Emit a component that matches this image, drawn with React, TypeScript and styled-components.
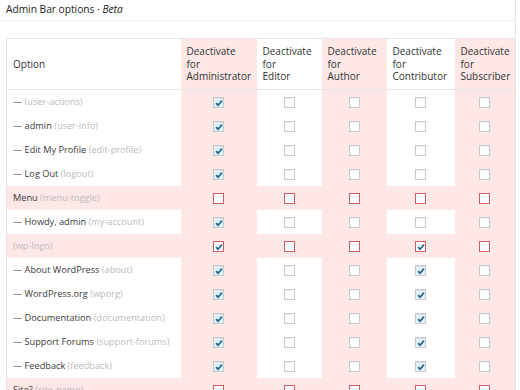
import styled, { createGlobalStyle } from "styled-components";

const GlobalStyle = createGlobalStyle`
  html, body {
    margin: 0;
    padding: 0;
    background: #fff;
  }
  body {
    font-family: "Open Sans", "Liberation Sans", sans-serif;
    color: #444;
  }
`;

const PINK = "#fde8e7";

const Panel = styled.div`
  width: 515px;
  height: 390px;
  overflow: hidden;
  border-right: 1px solid #e5e5e5;
  background: #fff;
`;

const Title = styled.h3`
  margin: 0;
  height: 20px;
  padding: 0 6px;
  font-size: 10.2px;
  font-weight: 400;
  line-height: 18px;
  color: #222;
  border-bottom: 1px solid #eee;
  em {
    font-style: italic;
  }
`;

const Inside = styled.div`
  padding: 17px 0 0 6px;
`;

const Table = styled.table`
  border-collapse: collapse;
  table-layout: fixed;
  width: 509px;
  border: 1px solid #e5e5e5;
  font-size: 9.2px;
`;

const Col = styled.col<{ $w: number }>`
  width: ${({ $w }) => $w}px;
`;

const HeadCell = styled.th<{ $pink?: boolean }>`
  height: 50px;
  padding: 0 6px;
  text-align: left;
  font-size: 10px;
  font-weight: 400;
  line-height: 12.5px;
  color: #333;
  vertical-align: middle;
  background: ${({ $pink }) => ($pink ? PINK : "#fff")};
  border-bottom: 1px solid #e5e5e5;
`;

const Row = styled.tr<{ $parent?: boolean }>`
  height: 24px;
  background: ${({ $parent }) => ($parent ? PINK : "transparent")};
`;

const NameCell = styled.td`
  padding: 0 6px;
  white-space: nowrap;
  color: #3a3a3a;
`;

const Slug = styled.span`
  color: #bbb;
`;

const BoxCell = styled.td<{ $pink?: boolean }>`
  padding: 0;
  text-align: center;
  vertical-align: middle;
  background: ${({ $pink }) => ($pink ? PINK : "#fff")};
  tr[data-parent="true"] & {
    background: transparent;
  }
`;

const Box = styled.span<{ $checked?: boolean; $parent?: boolean }>`
  display: inline-flex;
  align-items: center;
  justify-content: center;
  box-sizing: border-box;
  width: 11px;
  height: 11px;
  vertical-align: middle;
  border: 1px solid ${({ $parent }) => ($parent ? "#cf5c66" : "#c6c9cc")};
  background: ${({ $checked, $parent }) =>
    $checked && !$parent ? "#e4f0f7" : "#fff"};
  box-shadow: ${({ $parent }) =>
    $parent ? "none" : "inset 0 1px 1px rgba(0, 0, 0, 0.06)"};
`;

const Tick = () => (
  <svg width="8" height="8" viewBox="0 0 8 8">
    <path d="M1 4.2 L3 6.2 L7 1.6" fill="none" stroke="#1f6a92" strokeWidth="1.7" />
  </svg>
);

const columns = [
  { key: "administrator", lines: ["Deactivate for", "Administrator"], w: 76, pink: true },
  { key: "editor", lines: ["Deactivate", "for", "Editor"], w: 65, pink: false },
  { key: "author", lines: ["Deactivate", "for", "Author"], w: 65, pink: true },
  { key: "contributor", lines: ["Deactivate", "for", "Contributor"], w: 68, pink: false },
  { key: "subscriber", lines: ["Deactivate", "for", "Subscriber"], w: 61, pink: true },
];

type Item = { label: string; slug: string; parent?: boolean; on: string[] };

const items: Item[] = [
  { label: "", slug: "user-actions", on: ["administrator"] },
  { label: "admin", slug: "user-info", on: ["administrator"] },
  { label: "Edit My Profile", slug: "edit-profile", on: ["administrator"] },
  { label: "Log Out", slug: "logout", on: ["administrator"] },
  { label: "Menu", slug: "menu-toggle", parent: true, on: [] },
  { label: "Howdy, admin", slug: "my-account", on: ["administrator"] },
  { label: "", slug: "wp-logo", parent: true, on: ["administrator", "contributor"] },
  { label: "About WordPress", slug: "about", on: ["administrator", "contributor"] },
  { label: "WordPress.org", slug: "wporg", on: ["administrator", "contributor"] },
  { label: "Documentation", slug: "documentation", on: ["administrator", "contributor"] },
  { label: "Support Forums", slug: "support-forums", on: ["administrator", "contributor"] },
  { label: "Feedback", slug: "feedback", on: ["administrator", "contributor"] },
  { label: "Site?", slug: "site-name", parent: true, on: [] },
];

const App = () => {
  return (
    <Panel>
      <GlobalStyle />
      <Title>
        Admin Bar options · <em>Beta</em>
      </Title>
      <Inside>
        <Table>
          <colgroup>
            <Col $w={174} />
            {columns.map((col) => (
              <Col key={col.key} $w={col.w} />
            ))}
          </colgroup>
          <thead>
            <tr>
              <HeadCell>Option</HeadCell>
              {columns.map((col) => (
                <HeadCell key={col.key} $pink={col.pink}>
                  {col.lines.map((line, i) => (
                    <div key={i}>{line}</div>
                  ))}
                </HeadCell>
              ))}
            </tr>
          </thead>
          <tbody>
            {items.map((item) => (
              <Row key={item.slug} $parent={item.parent} data-parent={item.parent ? "true" : "false"}>
                <NameCell>
                  {!item.parent && "— "}
                  {item.label && `${item.label} `}
                  <Slug>({item.slug})</Slug>
                </NameCell>
                {columns.map((col) => {
                  const checked = item.on.includes(col.key);
                  return (
                    <BoxCell key={col.key} $pink={col.pink}>
                      <Box $checked={checked} $parent={item.parent}>
                        {checked && <Tick />}
                      </Box>
                    </BoxCell>
                  );
                })}
              </Row>
            ))}
          </tbody>
        </Table>
      </Inside>
    </Panel>
  );
};

export default App;
